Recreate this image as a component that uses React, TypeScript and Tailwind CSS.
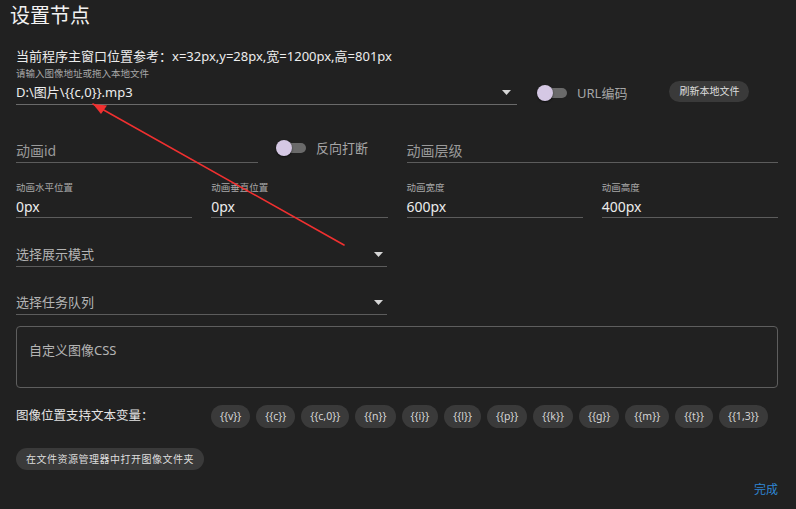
import React from "react";

const font = { fontFamily: '"Noto Sans", "Noto Sans CJK SC", sans-serif' };

const Caret = () => (
  <svg width="9" height="5" viewBox="0 0 9 5" className="shrink-0">
    <path d="M0 0 L9 0 L4.5 5 Z" fill="#d6d6d6" />
  </svg>
);

const Toggle = () => (
  <div className="relative w-[30px] h-[16px] shrink-0">
    <div className="absolute left-[4px] right-0 top-[3px] h-[10px] rounded-full bg-[#6a6a6a]" />
    <div className="absolute left-0 top-0 w-[16px] h-[16px] rounded-full bg-[#d5c8e4] shadow-[0_1px_2px_rgba(0,0,0,0.6)]" />
  </div>
);

const vars = ["{{v}}", "{{c}}", "{{c,0}}", "{{n}}", "{{i}}", "{{l}}", "{{p}}", "{{k}}", "{{g}}", "{{m}}", "{{t}}", "{{1,3}}"];

const Field = ({ label, value }: { label: string; value: string }) => (
  <div className="flex flex-col">
    <div className="text-[9.5px] leading-[14px] text-[#a8a8a8]">{label}</div>
    <div className="h-[23px] flex items-center border-b border-[#5c5c5c] text-[14px] text-[#ececec]">{value}</div>
  </div>
);

const App: React.FC = () => {
  return (
    <div className="relative w-full h-[509px] bg-[#212121] overflow-hidden" style={font}>
      <div className="px-[10px] pt-[2px] text-[20px] leading-[28px] text-[#f2f2f2]">设置节点</div>

      <div className="pl-[16px] pr-[18px]">
        <div className="mt-[16px] text-[13px] leading-[20px] text-[#ededed] flex">
          <span>当前程序主窗口位置参考：</span>
          <span>x=32px,y=28px,宽=1200px,高=801px</span>
        </div>

        <div className="flex items-start mt-[1px]">
          <div className="w-[501px] flex flex-col shrink-0">
            <div className="text-[9.5px] leading-[14px] text-[#a8a8a8]">请输入图像地址或拖入本地文件</div>
            <div className="h-[24px] flex items-center justify-between border-b border-[#6a6a6a] pr-[6px]">
              <span className="text-[13px] text-[#ededed]">D:\图片\{"{{c,0}}"}.mp3</span>
              <Caret />
            </div>
          </div>
          <div className="ml-[20px] mt-[18px] flex items-center">
            <Toggle />
            <span className="ml-[10px] text-[13px] leading-[16px] text-[#a6a6a6]">URL编码</span>
          </div>
          <button className="ml-[42px] mt-[14px] h-[21px] px-[10px] rounded-full bg-[#3a3a3a] text-[10px] text-[#dedede]">
            刷新本地文件
          </button>
        </div>

        <div className="mt-[34px] grid grid-cols-2 gap-x-[19px]">
          <div className="flex items-start">
            <div className="w-[242px] h-[24px] flex items-center border-b border-[#5c5c5c] text-[14px] text-[#9a9a9a]">
              动画id
            </div>
            <div className="ml-[18px] mt-[1px] flex items-center">
              <Toggle />
              <span className="ml-[10px] text-[13px] leading-[16px] text-[#a6a6a6]">反向打断</span>
            </div>
          </div>
          <div className="h-[24px] flex items-center border-b border-[#5c5c5c] text-[14px] text-[#9a9a9a]">动画层级</div>
        </div>

        <div className="mt-[18px] grid grid-cols-4 gap-x-[19px]">
          <Field label="动画水平位置" value="0px" />
          <Field label="动画垂直位置" value="0px" />
          <Field label="动画宽度" value="600px" />
          <Field label="动画高度" value="400px" />
        </div>

        <div className="mt-[25px] w-[371px] h-[24px] flex items-center justify-between border-b border-[#5c5c5c] pr-[4px]">
          <span className="text-[13px] text-[#b4b4b4]">选择展示模式</span>
          <Caret />
        </div>

        <div className="mt-[24px] w-[371px] h-[24px] flex items-center justify-between border-b border-[#5c5c5c] pr-[4px]">
          <span className="text-[13px] text-[#b4b4b4]">选择任务队列</span>
          <Caret />
        </div>

        <div className="mt-[11px] h-[62px] border border-[#5e5e5e] rounded-[4px] pl-[12px] pt-[13px] text-[13px] leading-[20px] text-[#b4b4b4]">
          自定义图像CSS
        </div>

        <div className="mt-[17px] flex items-center">
          <div className="w-[195px] shrink-0 text-[12.5px] text-[#e4e4e4]">图像位置支持文本变量：</div>
          <div className="flex gap-[6px]">
            {vars.map((v) => (
              <span key={v} className="h-[23px] px-[9px] flex items-center rounded-full bg-[#3a3a3a] text-[10.5px] text-[#d4d4d4]">
                {v}
              </span>
            ))}
          </div>
        </div>

        <button className="mt-[20px] h-[22px] px-[10px] rounded-full bg-[#3a3a3a] text-[10px] tracking-[0.5px] text-[#dedede]">
          在文件资源管理器中打开图像文件夹
        </button>

        <div className="mt-[11px] flex justify-end">
          <span className="text-[12px] text-[#2f86d4]">完成</span>
        </div>
      </div>

      <svg className="absolute inset-0 pointer-events-none" width="796" height="509">
        <line x1="93" y1="104" x2="344" y2="245" stroke="#f03030" strokeWidth="1.6" strokeLinecap="round" />
        <path d="M93 104 L107 105.5 L101 114 Z" fill="#f03030" />
      </svg>
    </div>
  );
};

export default App;
